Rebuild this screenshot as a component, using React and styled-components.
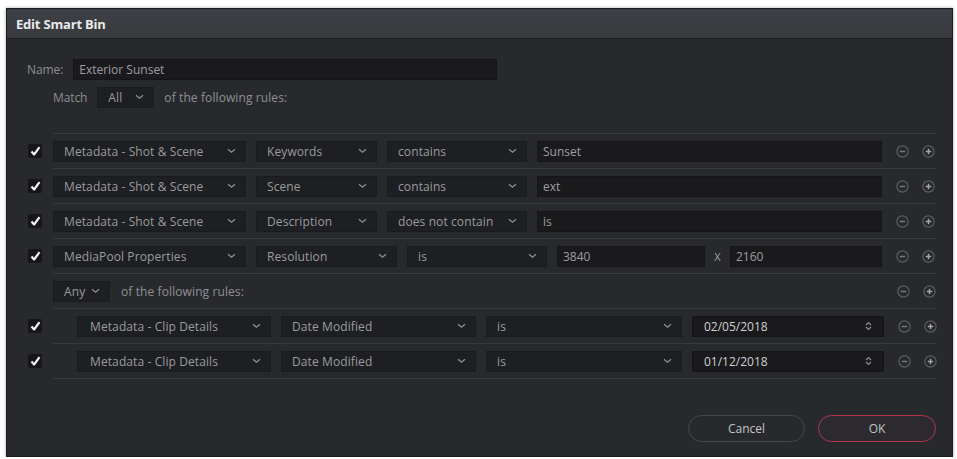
import React from 'react'
import styled, { createGlobalStyle } from 'styled-components'

const GlobalStyle = createGlobalStyle`
  html, body {
    margin: 0;
    padding: 0;
    background: #ffffff;
  }
  body {
    font-family: "Open Sans", "DejaVu Sans", sans-serif;
    -webkit-font-smoothing: antialiased;
  }
`

const Dialog = styled.div`
  margin: 8px 0 0 6px;
  width: 947px;
  height: 449px;
  background: #28292d;
  border: 1px solid #1b1c1e;
  box-sizing: border-box;
  display: flex;
  flex-direction: column;
  box-shadow: 0 0 3px rgba(0, 0, 0, 0.35);
`

const TitleBar = styled.div`
  height: 29px;
  flex: none;
  background: linear-gradient(#3d4044, #383a3e);
  border-bottom: 1px solid #1d1e21;
  display: flex;
  align-items: center;
  padding-left: 9px;
  font-size: 13px;
  font-weight: 700;
  color: #e9e9ea;
  letter-spacing: -0.2px;
`

const Body = styled.div`
  flex: 1;
  display: flex;
  flex-direction: column;
`

const NameRow = styled.div`
  display: flex;
  align-items: center;
  margin-top: 20px;
  padding-left: 20px;
  gap: 10px;
`

const Label = styled.span`
  font-size: 12px;
  color: #8c8d91;
  letter-spacing: -0.1px;
`

const TextField = styled.div`
  width: ${({ $w }) => $w}px;
  height: 21px;
  flex: none;
  box-sizing: border-box;
  background: #1a1a1d;
  border: 1px solid #151517;
  display: flex;
  align-items: center;
  justify-content: space-between;
  padding: 0 10px 0 ${({ $pad }) => $pad ?? 5}px;
  font-size: 12px;
  color: ${({ $bright }) => ($bright ? '#d0d0d3' : '#9d9ea2')};
`

const MatchRow = styled.div`
  display: flex;
  align-items: center;
  margin-top: 6px;
  padding-left: 46px;
  height: 22px;
  gap: 10px;
`

const Select = styled.div`
  width: ${({ $w }) => $w}px;
  height: 21px;
  flex: none;
  box-sizing: border-box;
  background: #1e1f22;
  border: 1px solid #1a1b1d;
  display: flex;
  align-items: center;
  justify-content: space-between;
  padding: 0 9px 0 ${({ $pad }) => $pad ?? 10}px;
  font-size: 12px;
  letter-spacing: 0.1px;
  color: #9a9b9f;
`

const Rules = styled.div`
  margin-top: 25px;
  display: flex;
  flex-direction: column;
`

const Row = styled.div`
  display: flex;
  align-items: center;
`

const CheckSlot = styled.div`
  width: 46px;
  flex: none;
  display: flex;
  padding-left: 21px;
  box-sizing: border-box;
`

const Check = styled.div`
  width: 14px;
  height: 14px;
  background: #161618;
  border-radius: 2px;
  display: flex;
  align-items: center;
  justify-content: center;
`

const RuleLine = styled.div`
  flex: none;
  width: ${({ $indent }) => 883 - ($indent || 0)}px;
  height: ${({ $end }) => ($end ? 0 : 34)}px;
  border-top: 1px solid #38393d;
  display: flex;
  align-items: center;
  padding-left: ${({ $indent }) => $indent || 0}px;
  gap: 10px;
`

const Fields = styled.div`
  display: flex;
  align-items: center;
  gap: ${({ $gap }) => $gap ?? 10}px;
`

const Spacer = styled.div`
  flex: 1;
`

const Times = styled.span`
  width: 25px;
  margin: 0 -10px;
  text-align: center;
  font-size: 11px;
  color: #a2a3a6;
`

const Following = styled.span`
  font-size: 12px;
  letter-spacing: 0.1px;
  color: #8f9094;
`

const Tools = styled.div`
  display: flex;
  align-items: center;
  gap: 13px;
  margin-left: 4px;
`

const Footer = styled.div`
  margin-top: 36px;
  display: flex;
  justify-content: flex-end;
  gap: 13px;
  padding-right: 16px;
`

const Button = styled.div`
  width: ${({ $w }) => $w}px;
  height: 27px;
  box-sizing: border-box;
  border-radius: 14px;
  border: 1.5px solid ${({ $primary }) => ($primary ? '#b2354b' : '#45474b')};
  background: ${({ $primary }) => ($primary ? '#2c2a2e' : '#27292c')};
  display: flex;
  align-items: center;
  justify-content: center;
  font-size: 12px;
  color: #c3c4c7;
`

const Chevron = () => (
  <svg width="9" height="6" viewBox="0 0 9 6">
    <path d="M1 1.2l3.5 3L8 1.2" fill="none" stroke="#8e8f93" strokeWidth="1.3" />
  </svg>
)

const Tick = () => (
  <svg width="11" height="10" viewBox="0 0 11 10">
    <path d="M1.5 5.5l2.6 3L9.5 1.2" fill="none" stroke="#f2f2f2" strokeWidth="2.2" strokeLinejoin="round" />
  </svg>
)

const Spin = () => (
  <svg width="9" height="10" viewBox="0 0 9 10">
    <path d="M2 4l2.5-2.4L7 4M2 6l2.5 2.4L7 6" fill="none" stroke="#8d8e92" strokeWidth="1.2" />
  </svg>
)

const RoundIcon = ({ plus }) => (
  <svg width="13" height="13" viewBox="0 0 13 13">
    <circle cx="6.5" cy="6.5" r="5.6" fill="none" stroke="#5c5d62" strokeWidth="1.2" />
    <path d="M3.8 6.5h5.4" stroke={plus ? '#a6a7ab' : '#77787c'} strokeWidth="1.5" />
    {plus && <path d="M6.5 3.8v5.4" stroke="#a6a7ab" strokeWidth="1.5" />}
  </svg>
)

const AddRemove = () => (
  <Tools>
    <RoundIcon />
    <RoundIcon plus />
  </Tools>
)

const Dropdown = ({ w, pad, children }) => (
  <Select $w={w} $pad={pad}>
    <span>{children}</span>
    <Chevron />
  </Select>
)

const rules = [
  { group: 'Metadata - Shot & Scene', field: 'Keywords', op: 'contains', value: 'Sunset' },
  { group: 'Metadata - Shot & Scene', field: 'Scene', op: 'contains', value: 'ext' },
  { group: 'Metadata - Shot & Scene', field: 'Description', op: 'does not contain', value: 'is' },
]

const nested = [
  { group: 'Metadata - Clip Details', field: 'Date Modified', op: 'is', value: '02/05/2018' },
  { group: 'Metadata - Clip Details', field: 'Date Modified', op: 'is', value: '01/12/2018' },
]

const Checked = () => (
  <CheckSlot>
    <Check>
      <Tick />
    </Check>
  </CheckSlot>
)

export default function App() {
  return (
    <>
      <GlobalStyle />
      <Dialog>
        <TitleBar>Edit Smart Bin</TitleBar>
        <Body>
          <NameRow>
            <Label>Name:</Label>
            <TextField $w={424}>Exterior Sunset</TextField>
          </NameRow>

          <MatchRow>
            <Label>Match</Label>
            <Dropdown w={57} pad={10}>All</Dropdown>
            <Following>of the following rules:</Following>
          </MatchRow>

          <Rules>
            {rules.map((r, i) => (
              <Row key={i}>
                <Checked />
                <RuleLine>
                  <Fields>
                    <Dropdown w={193}>{r.group}</Dropdown>
                    <Dropdown w={121}>{r.field}</Dropdown>
                    <Dropdown w={140}>{r.op}</Dropdown>
                    <TextField $w={345}>{r.value}</TextField>
                  </Fields>
                  <AddRemove />
                </RuleLine>
              </Row>
            ))}

            <Row>
              <Checked />
              <RuleLine>
                <Fields>
                  <Dropdown w={193}>MediaPool Properties</Dropdown>
                  <Dropdown w={141}>Resolution</Dropdown>
                  <Dropdown w={140}>is</Dropdown>
                  <TextField $w={148}>3840</TextField>
                  <Times>X</Times>
                  <TextField $w={152}>2160</TextField>
                </Fields>
                <AddRemove />
              </RuleLine>
            </Row>

            <Row>
              <CheckSlot />
              <RuleLine>
                <Fields $gap={11}>
                  <Dropdown w={57} pad={10}>Any</Dropdown>
                  <Following>of the following rules:</Following>
                </Fields>
                <Spacer />
                <AddRemove />
              </RuleLine>
            </Row>

            {nested.map((r, i) => (
              <Row key={i}>
                <Checked />
                <RuleLine $indent={24}>
                  <Fields>
                    <Dropdown w={194} pad={12}>{r.group}</Dropdown>
                    <Dropdown w={195}>{r.field}</Dropdown>
                    <Dropdown w={196}>{r.op}</Dropdown>
                    <TextField $w={192} $pad={11} $bright>
                      <span>{r.value}</span>
                      <Spin />
                    </TextField>
                  </Fields>
                  <AddRemove />
                </RuleLine>
              </Row>
            ))}

            <Row>
              <CheckSlot />
              <RuleLine $end />
            </Row>
          </Rules>

          <Footer>
            <Button $w={117}>Cancel</Button>
            <Button $w={118} $primary>OK</Button>
          </Footer>
        </Body>
      </Dialog>
    </>
  )
}
